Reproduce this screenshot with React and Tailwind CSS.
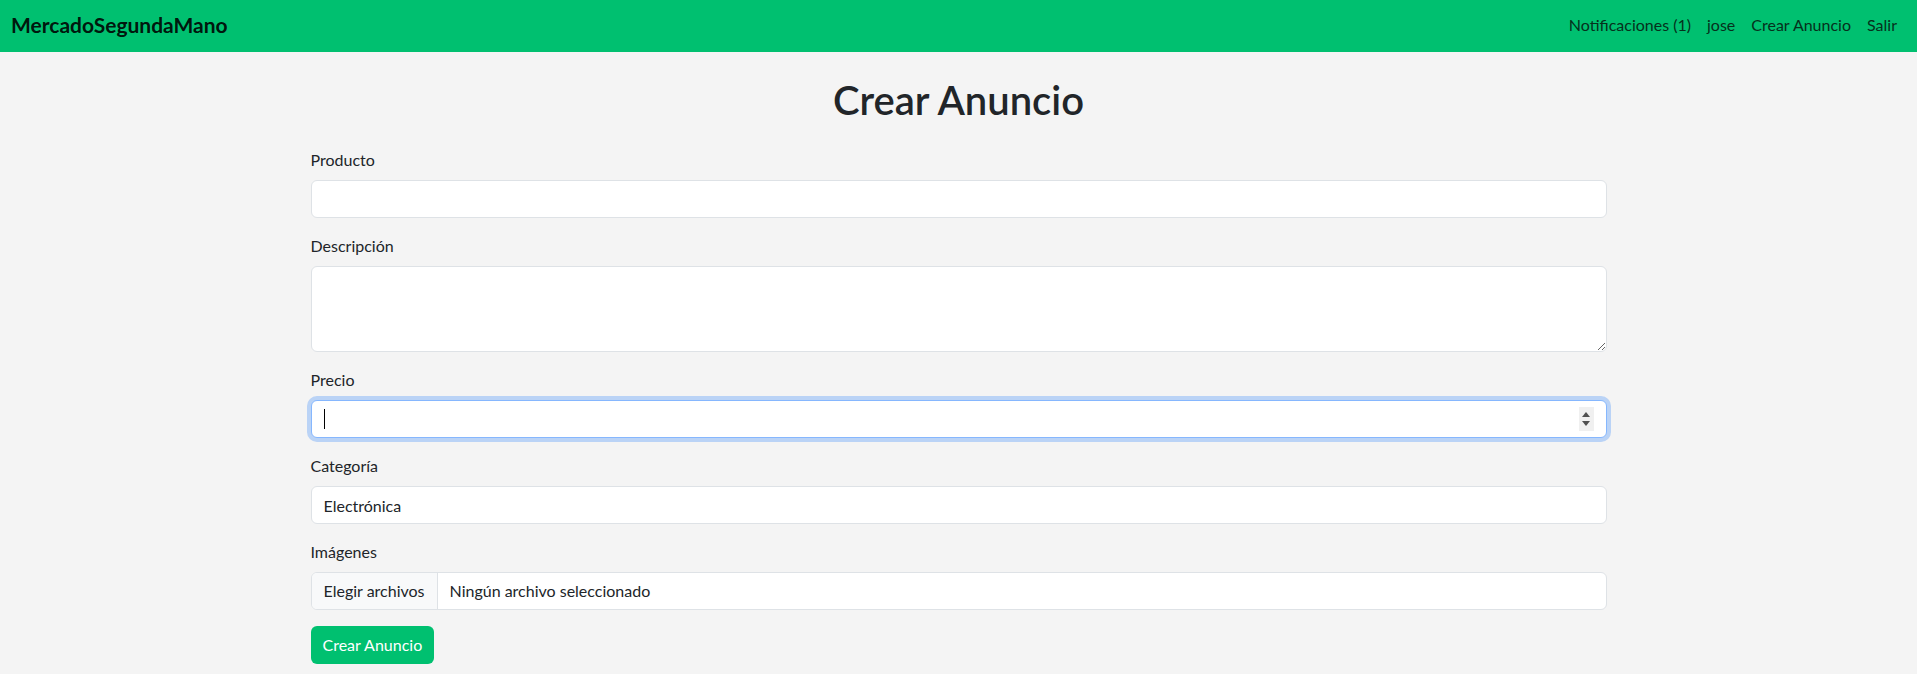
import React from "react";

const font = { fontFamily: "Lato, 'Noto Sans', 'Liberation Sans', sans-serif" };

const Field = ({ label, children }) => (
  <div className="mb-4">
    <label className="block mb-2 text-base leading-6 text-[#212529]">{label}</label>
    {children}
  </div>
);

const inputCls =
  "block w-full h-[38px] px-3 text-base text-[#212529] bg-white border border-[#dee2e6] rounded-md outline-none";

export default function App() {
  const links = ["Notificaciones (1)", "jose", "Crear Anuncio", "Salir"];

  return (
    <div className="min-h-screen bg-[#f4f4f4]" style={font}>
      <nav className="h-[52px] bg-[#00c070] flex items-center justify-between px-3 pb-[2px]">
        <a className="text-[21px] font-bold text-black/90 leading-[30px] -ml-px">MercadoSegundaMano</a>
        <ul className="flex items-center">
          {links.map((l) => (
            <li key={l} className="px-2 text-base leading-6 text-[#06301c]">
              {l}
            </li>
          ))}
        </ul>
      </nav>

      <div className="w-[1320px] mx-auto px-3 pt-6">
        <h1 className="text-center text-[40px] leading-[48px] font-semibold text-[#212529] mb-6">
          Crear Anuncio
        </h1>

        <form>
          <Field label="Producto">
            <input className={inputCls} />
          </Field>

          <Field label="Descripción">
            <textarea
              rows={3}
              className="block w-full h-[86px] px-3 py-1.5 text-base text-[#212529] bg-white border border-[#dee2e6] rounded-md outline-none"
            />
          </Field>

          <Field label="Precio">
            <div className="relative">
              <div className="h-[38px] w-full bg-white border border-[#86b7fe] rounded-md shadow-[0_0_0_4px_rgba(13,110,253,0.25)]" />
              <span className="absolute left-[13px] top-[9px] w-px h-[20px] bg-black" />
              <span className="absolute right-[13px] top-[7px] w-[15px] h-[24px] bg-[#f0f0f0] flex flex-col items-center justify-center gap-[4px]">
                <svg width="8" height="5" viewBox="0 0 8 5">
                  <path d="M0 5 L4 0 L8 5 Z" fill="#505050" />
                </svg>
                <svg width="8" height="5" viewBox="0 0 8 5">
                  <path d="M0 0 L8 0 L4 5 Z" fill="#505050" />
                </svg>
              </span>
            </div>
          </Field>

          <Field label="Categoría">
            <input className={inputCls} defaultValue="Electrónica" readOnly />
          </Field>

          <Field label="Imágenes">
            <div className="flex h-[38px] w-full bg-white border border-[#dee2e6] rounded-md overflow-hidden text-base text-[#212529]">
              <span className="flex items-center px-3 bg-[#f8f9fa] border-r border-[#dee2e6]">
                Elegir archivos
              </span>
              <span className="flex items-center px-3">Ningún archivo seleccionado</span>
            </div>
          </Field>

          <button
            type="button"
            className="h-[38px] px-3 rounded-md bg-[#00c070] text-white text-base leading-6"
          >
            Crear Anuncio
          </button>
        </form>
      </div>
    </div>
  );
}
